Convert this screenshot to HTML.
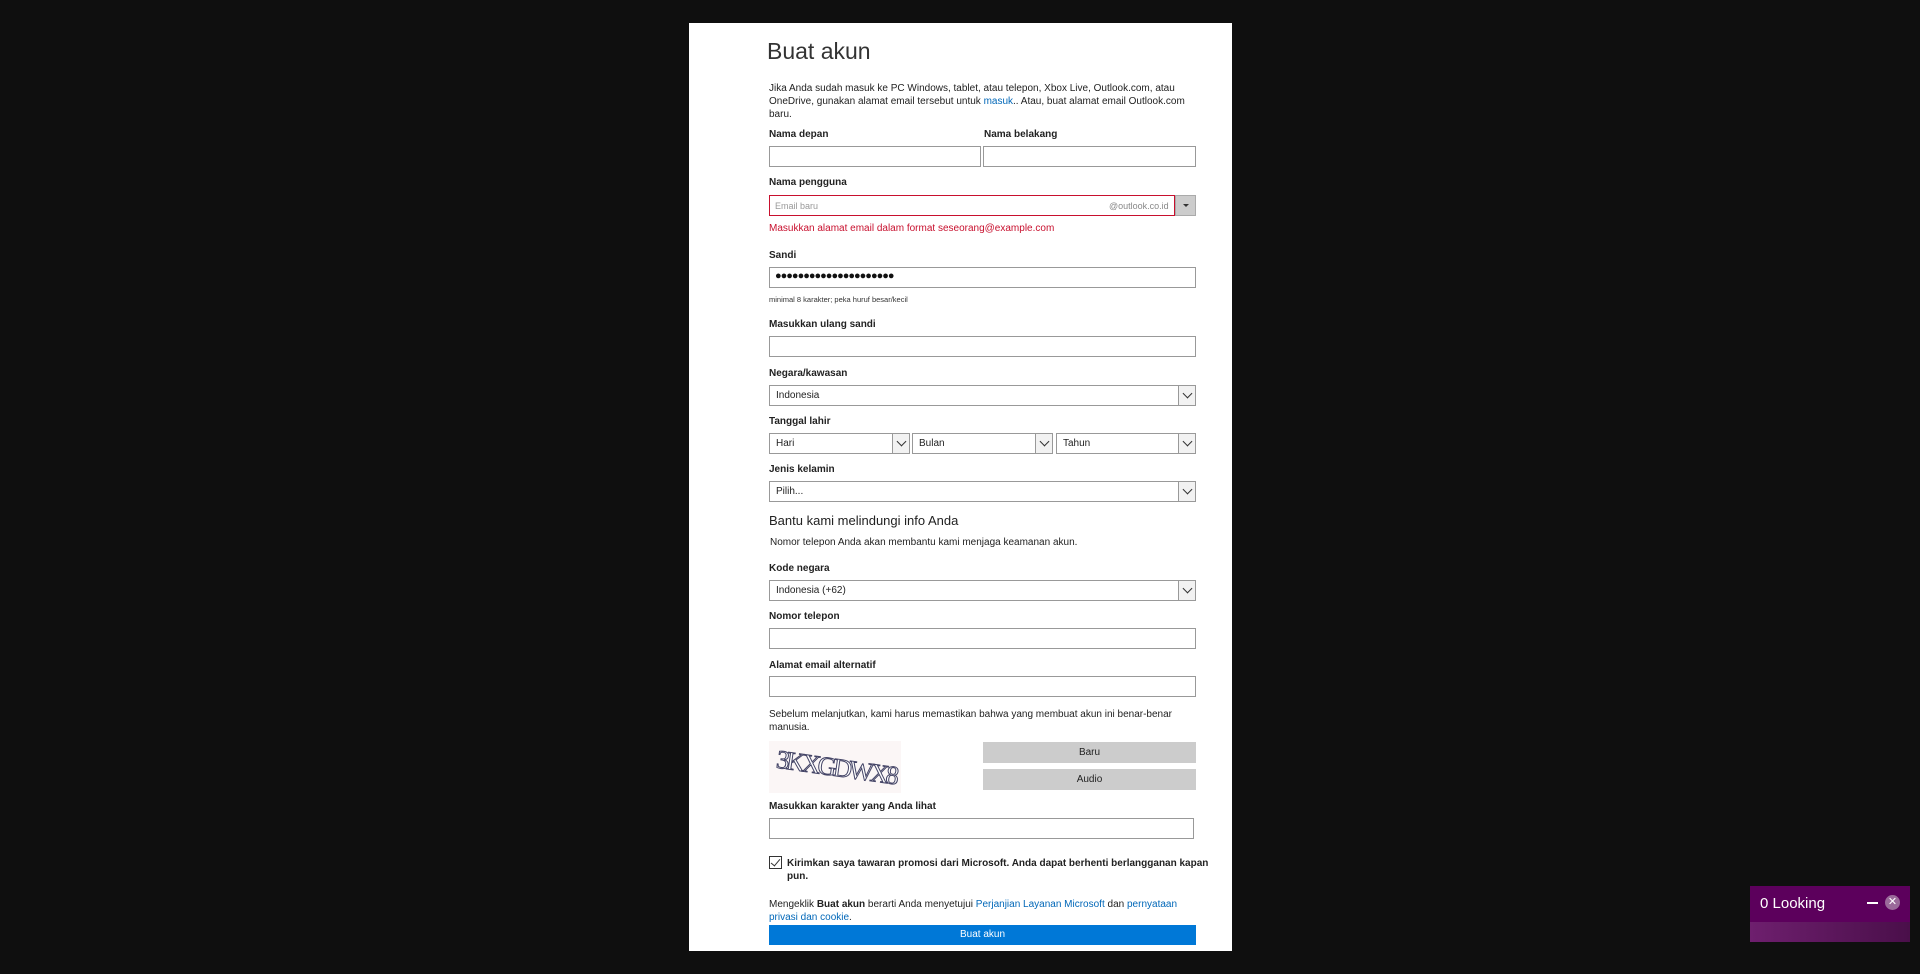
<!DOCTYPE html>
<html><head><meta charset="utf-8"><style>
*{box-sizing:border-box;margin:0;padding:0}
body{width:1920px;height:974px;background:#0f0f0f;font-family:"Liberation Sans",sans-serif;position:relative;overflow:hidden;color:#222}
#p{position:absolute;left:689px;top:23px;width:543px;height:928px;background:#fff}
.a{position:absolute;white-space:nowrap}
.t{font-size:10px;line-height:13px;color:#222}
.l{font-size:10px;font-weight:bold;color:#222}
.i{position:absolute;border:1px solid #999;background:#fff;height:21px}
.s{position:absolute;border:1px solid #999;background:#fff;height:21px;font-size:10px;line-height:19px;padding-left:6px;color:#222}
.s:after{content:"";position:absolute;right:0;top:0;width:16px;height:19px;border-left:1px solid #999;background:#f2f2f2}
.s b{position:absolute;right:4px;width:7px;height:7px;border-right:1.5px solid #333;border-bottom:1.5px solid #333;transform:rotate(45deg);z-index:2;top:4px}
a{color:#0067b8;text-decoration:none}
.btn{position:absolute;background:#ccc;font-size:10px;text-align:center;line-height:21px;color:#222}
</style></head><body>
<div id="p"></div>
<div class="a" style="left:767px;top:38px;font-size:23px;color:#333;font-weight:300">Buat akun</div>
<div class="a t" style="left:769px;top:82px">Jika Anda sudah masuk ke PC Windows, tablet, atau telepon, Xbox Live, Outlook.com, atau<br>OneDrive, gunakan alamat email tersebut untuk <a>masuk</a>.. Atau, buat alamat email Outlook.com<br>baru.</div>
<div class="a l" style="left:769px;top:129px">Nama depan</div>
<div class="a l" style="left:984px;top:129px">Nama belakang</div>
<div class="i" style="left:769px;top:146px;width:212px"></div>
<div class="i" style="left:983px;top:146px;width:213px"></div>
<div class="a l" style="left:769px;top:177px">Nama pengguna</div>
<div class="i" style="left:769px;top:195px;width:406px;border-color:#c8102e"></div>
<div class="a" style="left:775px;top:201px;font-size:9px;color:#999">Email baru</div>
<div class="a" style="left:1109px;top:201px;font-size:9px;color:#888">@outlook.co.id</div>
<div style="position:absolute;left:1175px;top:195px;width:21px;height:21px;background:#ccc;border:1px solid #aaa"><div style="position:absolute;left:7px;top:8px;border-left:3px solid transparent;border-right:3px solid transparent;border-top:3px solid #333"></div></div>
<div class="a" style="left:769px;top:223px;font-size:10px;color:#c8102e">Masukkan alamat email dalam format seseorang@example.com</div>
<div class="a l" style="left:769px;top:250px">Sandi</div>
<div class="i" style="left:769px;top:267px;width:427px"></div>
<div class="a" style="left:775px;top:270px;font-size:11px;letter-spacing:-1px;color:#111">●●●●●●●●●●●●●●●●●●●●●</div>
<div class="a" style="left:769px;top:295px;font-size:7.5px;color:#333">minimal 8 karakter; peka huruf besar/kecil</div>
<div class="a l" style="left:769px;top:319px">Masukkan ulang sandi</div>
<div class="i" style="left:769px;top:336px;width:427px"></div>
<div class="a l" style="left:769px;top:368px">Negara/kawasan</div>
<div class="s" style="left:769px;top:385px;width:427px">Indonesia<b></b></div>
<div class="a l" style="left:769px;top:416px">Tanggal lahir</div>
<div class="s" style="left:769px;top:433px;width:141px">Hari<b></b></div>
<div class="s" style="left:912px;top:433px;width:141px">Bulan<b></b></div>
<div class="s" style="left:1056px;top:433px;width:140px">Tahun<b></b></div>
<div class="a l" style="left:769px;top:464px">Jenis kelamin</div>
<div class="s" style="left:769px;top:481px;width:427px">Pilih...<b></b></div>
<div class="a" style="left:769px;top:513px;font-size:13px;color:#222">Bantu kami melindungi info Anda</div>
<div class="a t" style="left:770px;top:536px">Nomor telepon Anda akan membantu kami menjaga keamanan akun.</div>
<div class="a l" style="left:769px;top:563px">Kode negara</div>
<div class="s" style="left:769px;top:580px;width:427px">Indonesia (+62)<b></b></div>
<div class="a l" style="left:769px;top:611px">Nomor telepon</div>
<div class="i" style="left:769px;top:628px;width:427px"></div>
<div class="a l" style="left:769px;top:660px">Alamat email alternatif</div>
<div class="i" style="left:769px;top:676px;width:427px"></div>
<div class="a t" style="left:769px;top:708px">Sebelum melanjutkan, kami harus memastikan bahwa yang membuat akun ini benar-benar<br>manusia.</div>
<div style="position:absolute;left:769px;top:741px;width:132px;height:52px;background:#fbf6f6"></div>
<div class="a" style="left:776px;top:753px;font-size:26px;color:#fff;-webkit-text-stroke:1px #446;font-family:'Liberation Serif',serif;letter-spacing:-3px;transform:rotate(8deg)">3KXGDWX8</div>
<div class="btn" style="left:983px;top:742px;width:213px">Baru</div>
<div class="btn" style="left:983px;top:769px;width:213px">Audio</div>
<div class="a l" style="left:769px;top:801px">Masukkan karakter yang Anda lihat</div>
<div class="i" style="left:769px;top:818px;width:425px"></div>
<div style="position:absolute;left:769px;top:856px;width:13px;height:13px;border:1px solid #333"><div style="position:absolute;left:3px;top:0px;width:5px;height:9px;border-right:1.5px solid #333;border-bottom:1.5px solid #333;transform:rotate(40deg)"></div></div>
<div class="a" style="left:787px;top:857px;font-size:10px;line-height:13px;font-weight:bold;color:#222">Kirimkan saya tawaran promosi dari Microsoft. Anda dapat berhenti berlangganan kapan<br>pun.</div>
<div class="a t" style="left:769px;top:898px">Mengeklik <b>Buat akun</b> berarti Anda menyetujui <a>Perjanjian Layanan Microsoft</a> dan <a>pernyataan</a><br><a>privasi dan cookie</a>.</div>
<div style="position:absolute;left:769px;top:925px;width:427px;height:20px;background:#0078d7;color:#fff;font-size:10px;text-align:center;line-height:20px">Buat akun</div>
<div style="position:absolute;left:1750px;top:886px;width:160px;height:56px;background:linear-gradient(90deg,#6e1f6e,#4a0f4a)"><div style="height:36px;background:#5c005c"></div></div>
<div class="a" style="left:1760px;top:895px;font-size:15px;color:#fff">0 Looking</div>
<div style="position:absolute;left:1867px;top:902px;width:11px;height:1.5px;background:#fff"></div>
<div style="position:absolute;left:1885px;top:895px;width:15px;height:15px;border-radius:50%;background:#9a6a9a;color:#fff;font-size:11px;line-height:15px;text-align:center">✕</div>
</body></html>
